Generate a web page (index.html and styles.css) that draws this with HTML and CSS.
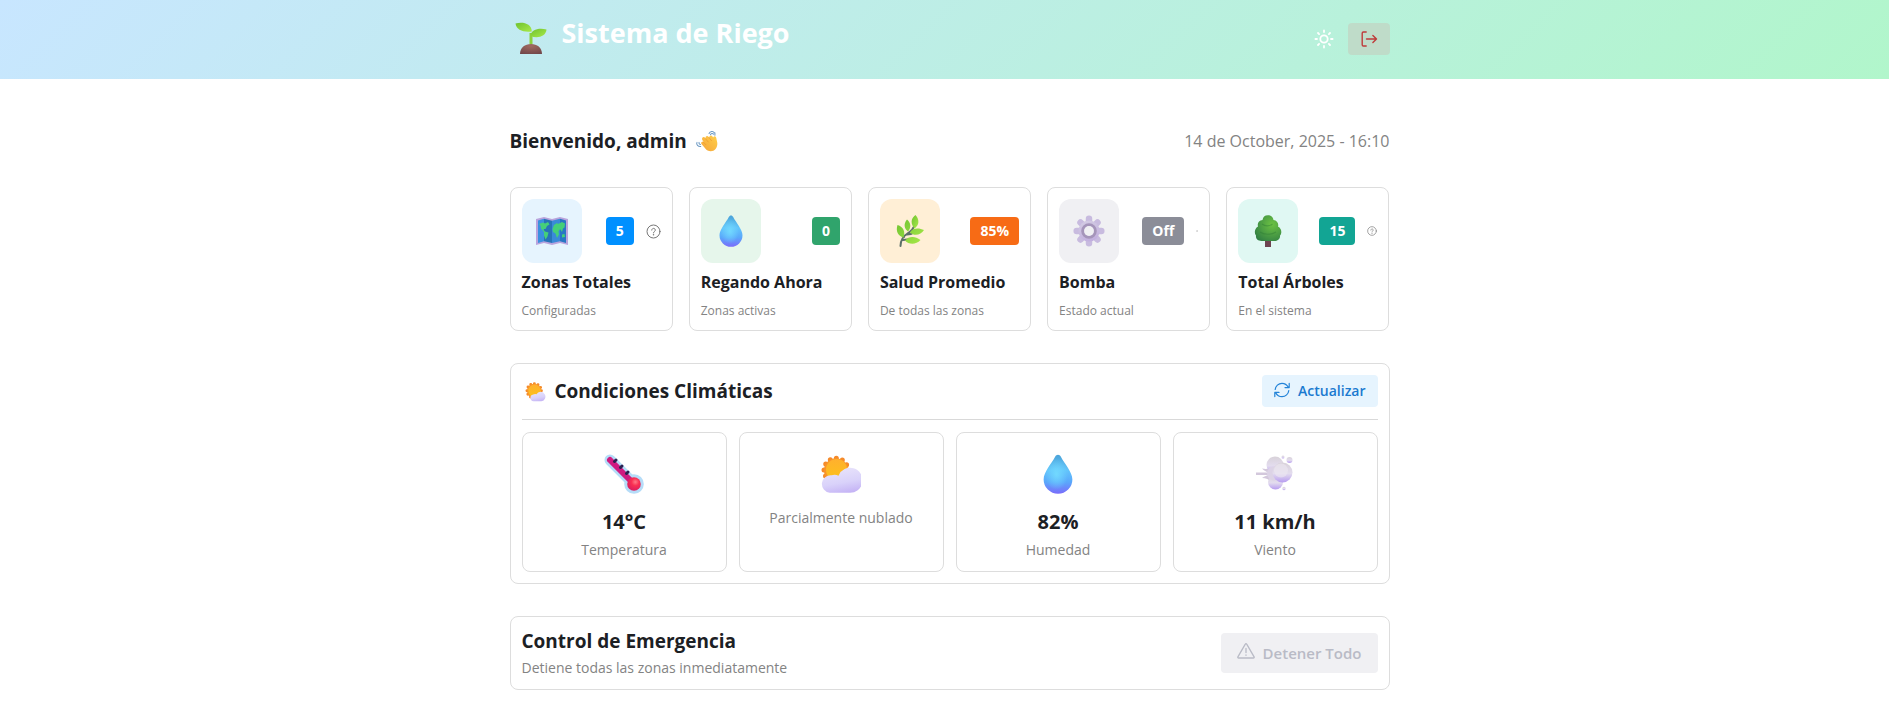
FILE: index.html
```html
<!DOCTYPE html>
<html lang="es">
<head>
<meta charset="utf-8">
<meta name="viewport" content="width=device-width, initial-scale=1">
<title>Sistema de Riego</title>
<link rel="stylesheet" href="styles.css">
</head>
<body>
<svg class="defs" aria-hidden="true">
  <defs>
    <linearGradient id="leaf" x1="0" y1="0" x2="1" y2="1"><stop offset="0" stop-color="#6fc22f"/><stop offset="1" stop-color="#a9ea4a"/></linearGradient>
    <radialGradient id="soil" cx=".5" cy=".2" r=".9"><stop offset="0" stop-color="#a06a60"/><stop offset="1" stop-color="#6f4548"/></radialGradient>
    <linearGradient id="water" x1=".5" y1="0" x2=".5" y2="1"><stop offset="0" stop-color="#4aa3d8"/><stop offset=".4" stop-color="#62c4fb"/><stop offset=".7" stop-color="#5aa8fb"/><stop offset="1" stop-color="#7a6cfb"/></linearGradient>
    <radialGradient id="shine" cx=".45" cy=".5" r=".4"><stop offset="0" stop-color="#74dcff" stop-opacity=".9"/><stop offset="1" stop-color="#74dcff" stop-opacity="0"/></radialGradient>
    <linearGradient id="sunfill" x1="0" y1="0" x2="0" y2="1"><stop offset="0" stop-color="#ffb02e"/><stop offset="1" stop-color="#fcc21a"/></linearGradient>
    <linearGradient id="cloud" x1=".3" y1="0" x2=".6" y2="1"><stop offset="0" stop-color="#e9e4fb"/><stop offset=".6" stop-color="#d9d2fa"/><stop offset="1" stop-color="#c5b4f5"/></linearGradient>
    <linearGradient id="gearfill" x1=".3" y1="0" x2=".6" y2="1"><stop offset="0" stop-color="#d3cbe3"/><stop offset="1" stop-color="#c1aede"/></linearGradient>
    <linearGradient id="puff" x1=".5" y1="0" x2=".5" y2="1"><stop offset="0" stop-color="#d8d2d9"/><stop offset=".55" stop-color="#e3dcee"/><stop offset="1" stop-color="#b79cf0"/></linearGradient>
    <radialGradient id="tree" cx=".65" cy=".35" r=".8"><stop offset="0" stop-color="#6cc243"/><stop offset="1" stop-color="#2f7d43"/></radialGradient>
    <linearGradient id="hand" x1="1" y1="0" x2="0" y2="1"><stop offset="0" stop-color="#ffd04a"/><stop offset="1" stop-color="#f5a43a"/></linearGradient>
    <radialGradient id="bulb" cx=".6" cy=".35" r=".7"><stop offset="0" stop-color="#ff7a86"/><stop offset=".4" stop-color="#f92f52"/><stop offset="1" stop-color="#d81a60"/></radialGradient>
    <symbol id="i-drop" viewBox="0 0 32 32">
      <path d="M16 .5c-1 0-1.700.6-2.200 1.500C11 7.500 4.500 14.500 4.500 20.300a11.500 11.500 0 0 0 23 0C27.500 14.500 21 7.500 18.200 2 17.700 1.100 17 .5 16 .5z" fill="url(#water)"/>
      <path d="M16 .5c-1 0-1.700.6-2.200 1.500C11 7.500 4.500 14.500 4.500 20.300a11.500 11.500 0 0 0 23 0C27.500 14.500 21 7.500 18.200 2 17.700 1.100 17 .5 16 .5z" fill="url(#shine)"/>
    </symbol>
    <symbol id="i-suncloud" viewBox="0 0 32 32">
      <circle cx="12" cy="13" r="9.600" fill="none" stroke="#f58a2a" stroke-width="4" stroke-dasharray="0 5.026" stroke-linecap="round"/>
      <circle cx="12" cy="13" r="9.600" fill="#f8952b"/>
      <circle cx="12.500" cy="12.500" r="8.500" fill="url(#sunfill)"/>
      <path d="M7 31a7 7 0 1 1 1.500-14 8 8 0 0 1 5.500 .3A10 10 0 1 1 22.500 31z" fill="url(#cloud)"/>
    </symbol>
    <symbol id="i-suncloud-small" viewBox="0 0 32 32">
      <circle cx="14" cy="15" r="11" fill="none" stroke="#f58a2a" stroke-width="4.500" stroke-dasharray="0 5.760" stroke-linecap="round"/>
      <circle cx="14" cy="15" r="11" fill="#f8952b"/>
      <circle cx="14.500" cy="15" r="9.500" fill="url(#sunfill)"/>
      <path d="M13 31a5.200 5.200 0 0 1-.5-10.300 5 5 0 0 1 5-.6A7.300 7.300 0 1 1 25 31z" fill="url(#cloud)"/>
    </symbol>
    <symbol id="i-help" viewBox="0 0 15 15">
      <g fill="none" stroke="#777" stroke-linecap="round"><circle cx="7.500" cy="7.500" r="6.500"/><path d="M5.700 6.100a1.800 1.700 0 1 1 2.900 1.300c-.7.500-1.100.8-1.100 1.500"/></g>
      <circle cx="7.500" cy="10.700" r=".75" fill="#777"/>
    </symbol>
  </defs>
</svg>

<header class="topbar">
  <div class="container topbar-row">
    <div class="brand">
      <svg class="brand-icon" viewBox="0 0 32 32" aria-hidden="true">
        <path d="M14.500 22V11h3v11z" fill="#8bd13f"/>
        <path d="M.5 1.500C8-.5 16.500 1.500 16.800 9.500 8 10.500 1.500 8 .5 1.500z" fill="url(#leaf)"/>
        <path d="M15.500 14C16 7.500 24 5.500 31.500 7.500 31 14.500 22.500 17 15.500 14z" fill="url(#leaf)"/>
        <path d="M5 32c0-6.500 5-10 11-10s11 3.500 11 10z" fill="url(#soil)"/>
      </svg>
      <h1 class="brand-name">Sistema de Riego</h1>
    </div>
    <div class="actions">
      <button class="theme-btn" type="button" aria-label="Cambiar tema">
        <svg viewBox="0 0 20 20" aria-hidden="true"><g fill="none" stroke="#fff" stroke-width="1.800" stroke-linecap="round"><circle cx="10" cy="10" r="3.700"/><path d="M10 1.400v1.600M10 17v1.600M1.400 10H3M17 10h1.600M4 4l1.100 1.100M14.900 14.900 16 16M4 16l1.100-1.100M14.900 5.100 16 4"/></g></svg>
      </button>
      <button class="exit-btn" type="button" aria-label="Cerrar sesión">
        <svg viewBox="0 0 18 18" aria-hidden="true"><g fill="none" stroke="#bf3a3a" stroke-width="1.400" stroke-linecap="round" stroke-linejoin="round"><path d="M6.200 2H3.400a1.200 1.200 0 0 0-1.200 1.200v11.600A1.200 1.200 0 0 0 3.400 16h2.800M6.500 9h10M12.900 5.400 16.500 9l-3.600 3.600"/></g></svg>
      </button>
    </div>
  </div>
</header>

<main class="container page">
  <section class="welcome">
    <h2 class="heading welcome-title">Bienvenido, admin
      <svg class="wave" viewBox="0 0 32 32" aria-hidden="true">
        <path d="M9 14c-1-3 2-5 4-3l1 1c-.5-3 2.500-4.500 4.500-2l.8.8c0-3 3-4 4.700-1.500l1 1.500c1-2.500 4-2 4.500 1L31 19c.5 7-4 12-9.500 12-3.500 0-6-1.500-8-4l-5.500-6.500c-1.500-2 .5-4.500 3-3z" fill="url(#hand)"/>
        <path d="m14 13 4 4.500M19 11l3.500 4.500M10.500 17.500l4 4" fill="none" stroke="#ee9430" stroke-width="1" stroke-linecap="round"/>
        <g fill="none" stroke="#6d9ac4" stroke-width="1.500" stroke-linecap="round"><path d="M19 5c1.500-3 6-4 7.500-1M21 7c1-2 3-2.500 4.500-1M27.500 7.500V4M1.500 18c-1.500 3 1.500 6.500 5.500 6M4.500 18c-.5 1.500.5 3 2 3"/></g>
      </svg>
    </h2>
    <time class="date" datetime="2025-10-14T16:10">14 de October, 2025 - 16:10</time>
  </section>

  <section class="stats">
    <article class="card">
      <div class="stat-top">
        <div class="tile tile-blue"><svg class="emoji" viewBox="0 0 32 32" aria-hidden="true">
          <path d="M0 4l8-2 8 2 8-2 8 2v26l-8-2-8 2-8-2-8 2z" fill="#b9a3dd"/>
          <path d="M2 5.500l6-1.700v22.400L2 28z" fill="#3b8fe0"/><path d="M8 3.800l8 2V28l-8-1.800z" fill="#2773b8"/><path d="M16 5.800l8-2v22.400L16 28z" fill="#3a8ad8"/><path d="M24 3.800l6 1.700V28l-6-1.800z" fill="#2876c4"/>
          <path d="M3 9l4-1.500 2 1 3-1.500 1.500 2.500L11 11l-1.500 3L7 14l2 2.500 3.500 1-1 4-2 3-1.500-4L8 17l-3-3.500-.5-3zM18 10l3-2 1 1 4-2 3 1.500-.5 4-1.500 1-1 3.500-2-3-1.500 2.500.5 3-2 3.500-1.500-4.500-2.500-1.500-.5-3zM26 19.500l2.500-.5.5 3-3 .5z" fill="#45cf79"/>
        </svg></div>
        <div class="stat-side"><span class="badge badge-blue">5</span><svg class="help" role="img" aria-label="Ayuda"><use href="#i-help"/></svg></div>
      </div>
      <h3 class="stat-title">Zonas Totales</h3>
      <p class="stat-note">Configuradas</p>
    </article>
    <article class="card">
      <div class="stat-top">
        <div class="tile tile-green"><svg class="emoji" aria-hidden="true"><use href="#i-drop"/></svg></div>
        <div class="stat-side"><span class="badge badge-green">0</span></div>
      </div>
      <h3 class="stat-title">Regando Ahora</h3>
      <p class="stat-note">Zonas activas</p>
    </article>
    <article class="card">
      <div class="stat-top">
        <div class="tile tile-orange"><svg class="emoji" viewBox="0 0 32 32" aria-hidden="true">
          <path d="M6.500 31c0-6 3-10 7-12.500S20 13 21 9M13 19.500c4 0 6-1 9-3M9 25c4-1 6-.5 9 0M10 22c-1-3-2-5-3.500-7" fill="none" stroke="#5c7068" stroke-width="2" stroke-linecap="round"/>
          <path d="M21.500 0c4 4.500 4 10-1 13.500C16.500 9 16.500 3.500 21.500 0z" fill="url(#leaf)"/>
          <path d="M13 4.500c4 3.500 4.500 8 1 12-4-3-4.500-8-1-12zM3.500 10c6 2 8 6.500 6 12.500-5.500-1.500-8-6.500-6-12.500zM16 17.500c2-4 8-5.500 14-2.500-3 5-9.500 6.500-14 2.500zM11 25.500c4-4.500 10-4.500 15.500-.5-4.500 5-11.500 5-15.500.5z" fill="url(#leaf)"/>
        </svg></div>
        <div class="stat-side"><span class="badge badge-orange">85%</span></div>
      </div>
      <h3 class="stat-title">Salud Promedio</h3>
      <p class="stat-note">De todas las zonas</p>
    </article>
    <article class="card">
      <div class="stat-top">
        <div class="tile tile-gray"><svg class="emoji" viewBox="0 0 32 32" aria-hidden="true">
          <g fill="none" stroke="#c8bbdf" stroke-width="6.500" stroke-linecap="round"><path d="M16 3.700v24.600M3.700 16h24.600M7.500 7.500l17 17M24.500 7.500l-17 17"/></g>
          <circle cx="16" cy="16" r="10.500" fill="url(#gearfill)"/>
          <circle cx="16" cy="16" r="6.300" fill="none" stroke="#a595ba" stroke-width="3"/>
          <circle cx="16" cy="16" r="4.900" fill="#f0f0f3"/>
        </svg></div>
        <div class="stat-side"><span class="badge badge-gray">Off</span><svg class="help help-dot" role="img" aria-label="Ayuda"><use href="#i-help"/></svg></div>
      </div>
      <h3 class="stat-title">Bomba</h3>
      <p class="stat-note">Estado actual</p>
    </article>
    <article class="card">
      <div class="stat-top">
        <div class="tile tile-teal"><svg class="emoji" viewBox="0 0 32 32" aria-hidden="true">
          <path d="M13 24h6v8h-6z" fill="#6d4450"/>
          <path d="M16 .3c3.500 0 5 2 5.500 4.700 3.500.5 5.500 3.500 4.500 6.500 4 2 4 7 2 9 .5 3.500-2.500 5.500-5.500 5.500h-13C6 26 3.500 24 4 20.500c-2-2.500-1.500-7 2-9C5 8 7 5.500 10.500 5 11 2 12.500.3 16 .3z" fill="url(#tree)"/>
          <path d="M10 9c3 2.500 7.500 2.500 10.500 0M8 17c4 3 11 3 16 0" fill="none" stroke="#2f7d35" stroke-width="1.200" opacity=".45"/>
        </svg></div>
        <div class="stat-side"><span class="badge badge-teal">15</span><svg class="help help-small" role="img" aria-label="Ayuda"><use href="#i-help"/></svg></div>
      </div>
      <h3 class="stat-title">Total Árboles</h3>
      <p class="stat-note">En el sistema</p>
    </article>
  </section>

  <section class="card weather">
    <div class="weather-head">
      <h2 class="heading weather-title"><svg class="title-icon" aria-hidden="true"><use href="#i-suncloud-small"/></svg>Condiciones Climáticas</h2>
      <button class="refresh" type="button">
        <svg viewBox="0 0 16 16" aria-hidden="true"><g fill="none" stroke="#2383d8" stroke-width="1.200" stroke-linecap="round" stroke-linejoin="round"><path d="M1.200 7.500C1.600 4 4.400 1.300 8 1.300c2.900 0 5 1.500 6.300 4M14.800 8.500c-.4 3.500-3.200 6.200-6.800 6.200-2.900 0-5-1.500-6.300-4M15.200 1.400v4.200H11M.8 14.600v-4.200H5"/></g></svg>
        Actualizar
      </button>
    </div>
    <div class="readings">
      <div class="card reading">
        <svg class="emoji-lg" viewBox="0 0 40 40" aria-hidden="true">
          <path d="M6 6 29.500 29.500" stroke="#b5dcf8" stroke-width="11" stroke-linecap="round"/>
          <circle cx="30" cy="30" r="9.800" fill="#b5dcf8"/>
          <path d="M6 6 28 28" stroke="#cf1a80" stroke-width="6" stroke-linecap="round"/>
          <circle cx="30" cy="30" r="6.800" fill="url(#bulb)"/>
          <path d="m10.500 7.500 1.500-1.500M16.500 13.500l1.500-1.500M22.500 19.500l1.500-1.500" stroke="#2b2150" stroke-width="3" stroke-linecap="round"/>
        </svg>
        <strong class="value">14°C</strong><span class="label">Temperatura</span>
      </div>
      <div class="card reading">
        <svg class="emoji-lg" aria-hidden="true"><use href="#i-suncloud"/></svg>
        <span class="label">Parcialmente nublado</span>
      </div>
      <div class="card reading">
        <svg class="emoji-lg" aria-hidden="true"><use href="#i-drop"/></svg>
        <strong class="value">82%</strong><span class="label">Humedad</span>
      </div>
      <div class="card reading">
        <svg class="emoji-lg" viewBox="0 0 40 40" aria-hidden="true">
          <path d="M1 18.500h13c-3-.5-5-2-7-4 4 1 7 .5 9-1.500l3 8-3 7c-2-2.500-5-4-9-4 2-1.500 4-2.500 7-3H1z" fill="#d3c8dc"/>
          <g fill="url(#puff)"><circle cx="20.500" cy="28" r="7.500"/><circle cx="20" cy="11" r="8.500"/><circle cx="34.500" cy="6" r="3"/><circle cx="28" cy="3" r="1.500"/><circle cx="29" cy="34.500" r="1.700"/></g>
          <circle cx="19" cy="19.500" r="7" fill="#dcd3e6"/>
          <circle cx="27.500" cy="18.500" r="10" fill="url(#puff)"/>
          <circle cx="26" cy="16.500" r="7" fill="#ede8f2" opacity=".6"/>
        </svg>
        <strong class="value">11 km/h</strong><span class="label">Viento</span>
      </div>
    </div>
  </section>

  <section class="card emergency">
    <div class="emergency-text">
      <h2 class="heading">Control de Emergencia</h2>
      <p class="label">Detiene todas las zonas inmediatamente</p>
    </div>
    <button class="stop" type="button" disabled>
      <svg viewBox="0 0 18 18" aria-hidden="true"><g fill="none" stroke="#b9bbc6" stroke-width="1.300" stroke-linecap="round" stroke-linejoin="round"><path d="M8.300 2.100.9 14.900c-.3.600 0 1.100.7 1.100h14.800c.7 0 1-.5.700-1.100L9.700 2.100c-.3-.6-1.100-.6-1.400 0zM9 6.500v4M9 13v.3"/></g></svg>
      Detener Todo
    </button>
  </section>
</main>
</body>
</html>
```
FILE: styles.css
```css
* { box-sizing: border-box; }

body {
  margin: 0;
  background: #fff;
  color: #1c2024;
  font-family: "Open Sans", "Noto Sans", sans-serif;
  font-size: 16px;
  line-height: 24px;
}

h1, h2, h3, p { margin: 0; }
svg { display: block; flex: none; }
button { border: 0; margin: 0; font: inherit; }
.defs { position: absolute; width: 0; height: 0; }

.container {
  max-width: 880px;
  margin: 0 auto;
}

.topbar {
  padding: 11px 0 13px 10px;
  background: linear-gradient(135deg, #c8e6ff, #b1f6cb);
}
.topbar-row {
  display: flex;
  align-items: center;
  justify-content: space-between;
  min-height: 55px;
}
.brand { display: flex; align-self: flex-start; gap: 15px; padding-left: 5px; }
.brand-icon { width: 32px; height: 32px; margin-top: 11px; }
.brand-name {
  color: #fff;
  font-size: 27px;
  font-weight: 700;
  line-height: 44px;
}
.actions { display: flex; align-items: center; gap: 14px; }
.theme-btn { padding: 0; background: none; }
.theme-btn svg { width: 20px; height: 20px; }
.exit-btn {
  padding: 7px 12px;
  border-radius: 4px;
  background: #bfdcc9;
}
.exit-btn svg { width: 18px; height: 18px; }

main.page {
  max-width: 890px;
  padding: 48px 0 24px 10px;
}

.heading { font-size: 19px; font-weight: 700; line-height: 28px; }

.welcome {
  display: flex;
  align-items: center;
  justify-content: space-between;
  margin-bottom: 32px;
}
.welcome-title { display: flex; align-items: center; gap: 9px; }
.wave { width: 22px; height: 22px; }
.date { color: #838383; }

.card {
  padding: 11px;
  border: 1px solid #dddddd;
  border-radius: 8px;
}

.stats {
  display: grid;
  grid-template-columns: repeat(5, 1fr);
  gap: 16px;
}
.stat-top { display: flex; align-items: center; justify-content: space-between; }
.tile {
  display: grid;
  place-items: center;
  width: 60px;
  height: 64px;
  border-radius: 12px;
}
.tile-blue { background: #e6f4fe; }
.tile-green { background: #e6f6eb; }
.tile-orange { background: #ffefd6; }
.tile-gray { background: #f0f0f3; }
.tile-teal { background: #e0f8f3; }
.emoji { width: 32px; height: 32px; }
.stat-side { display: flex; align-items: center; gap: 12px; }
.badge {
  padding: 4px 10px;
  border-radius: 4px;
  color: #fff;
  font-size: 14px;
  font-weight: 700;
  line-height: 20px;
}
.badge-blue { background: #0090ff; }
.badge-green { background: #30a46c; }
.badge-orange { background: #f76b15; }
.badge-gray { background: #8b8d98; }
.badge-teal { background: #12a594; }
.help { width: 15px; height: 15px; }
.help-small { width: 10px; height: 10px; }
.help-dot { width: 2px; height: 2px; }
.stat-title { margin-top: 7px; font-size: 16px; font-weight: 700; line-height: 24px; }
.stat-note { margin-top: 9px; color: #838383; font-size: 12px; line-height: 16px; }

.weather { margin-top: 32px; }
.weather-head {
  display: flex;
  align-items: center;
  justify-content: space-between;
  padding-bottom: 12px;
  border-bottom: 1px solid #d9d9d9;
}
.weather-title { display: flex; align-items: center; gap: 9px; padding-left: 3px; }
.title-icon { width: 21px; height: 21px; }
.refresh {
  display: flex;
  align-items: center;
  gap: 8px;
  padding: 6px 12px;
  border-radius: 4px;
  background: #e6f4fe;
  color: #1b7ad0;
  font-size: 14px;
  font-weight: 600;
  line-height: 20px;
}
.refresh svg { width: 16px; height: 16px; margin-bottom: 2px; }
.readings {
  display: grid;
  grid-template-columns: repeat(4, 1fr);
  gap: 12px;
  margin-top: 12px;
}
.reading {
  display: flex;
  flex-direction: column;
  align-items: center;
  padding: 21px 11px 11px;
}
.emoji-lg { width: 40px; height: 40px; margin-bottom: 14px; }
.value { font-size: 20px; font-weight: 700; line-height: 28px; margin-bottom: 4px; }
.label { color: #838383; font-size: 14px; line-height: 20px; }

.emergency {
  display: flex;
  align-items: center;
  justify-content: space-between;
  margin-top: 32px;
}
.emergency-text .heading { margin-bottom: 4px; line-height: 26px; }
.stop {
  display: flex;
  align-items: center;
  gap: 8px;
  padding: 8px 16px;
  border-radius: 4px;
  background: #f0f0f3;
  color: #b9bbc6;
  font-size: 15px;
  font-weight: 600;
  line-height: 24px;
}
.stop svg { width: 18px; height: 18px; margin-bottom: 4px; }
```
